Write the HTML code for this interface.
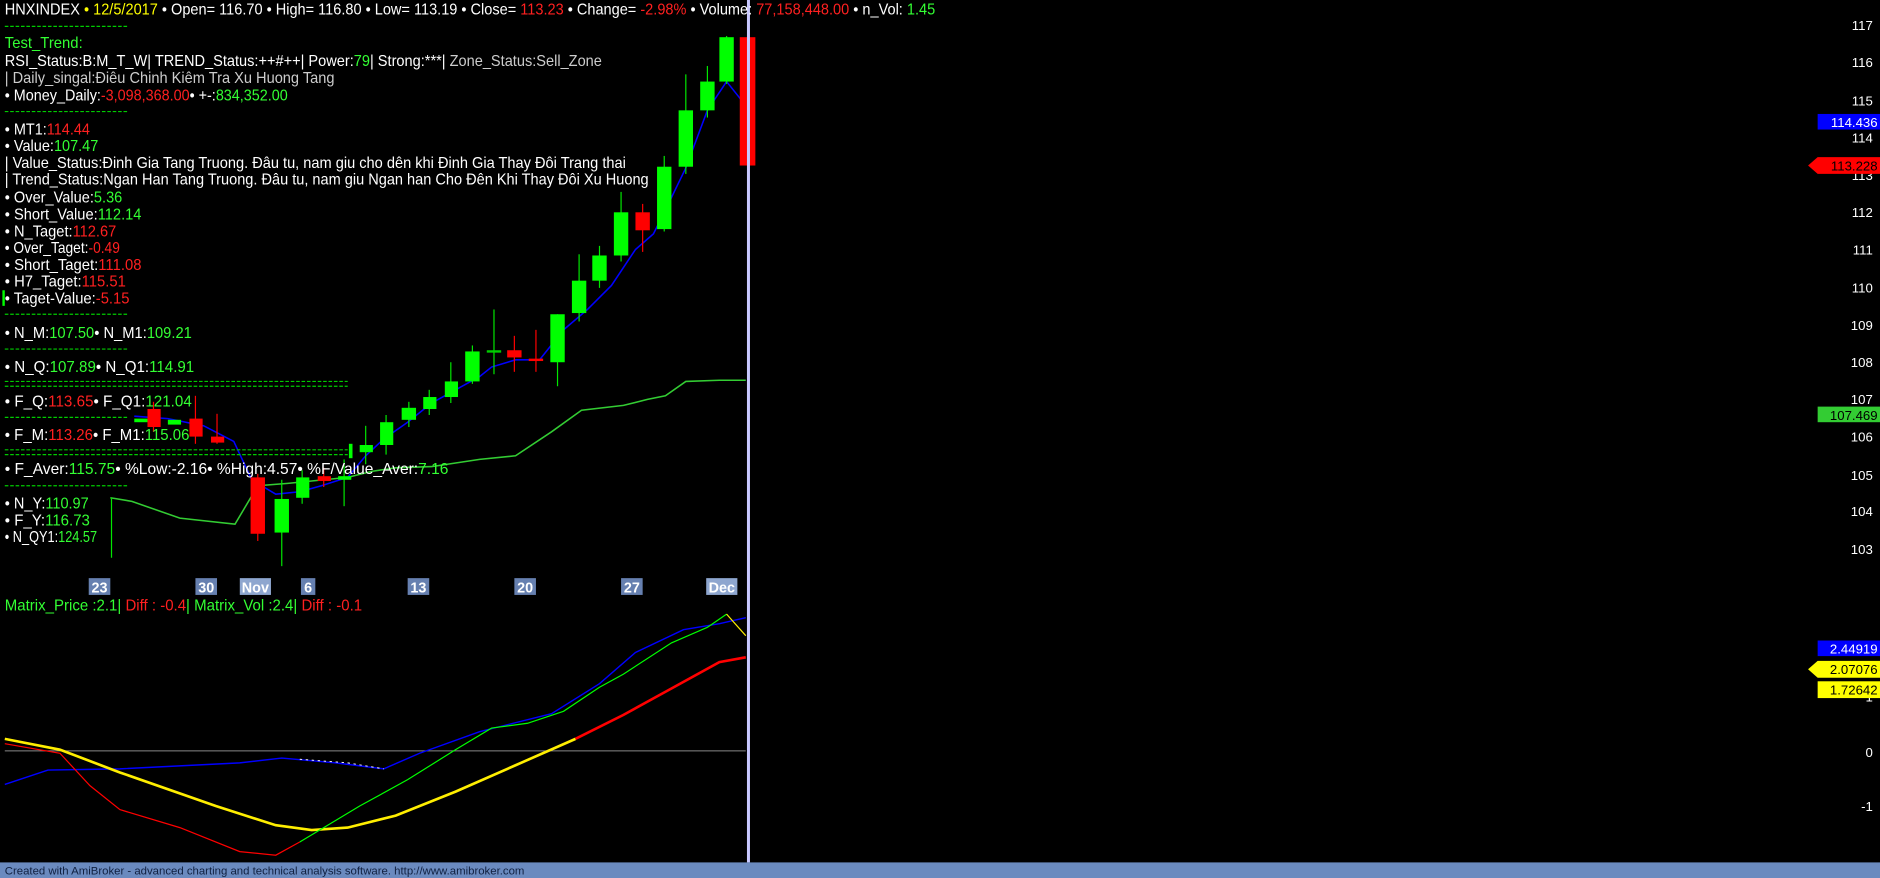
<!DOCTYPE html>
<html><head><meta charset="utf-8"><style>
html,body{margin:0;padding:0;background:#000;overflow:hidden}
svg{display:block}
text{font-family:"Liberation Sans",Arial,sans-serif}
</style></head><body>
<svg width="1880" height="878" viewBox="0 0 1568 732" preserveAspectRatio="none" xmlns="http://www.w3.org/2000/svg">
<rect width="1568" height="732" fill="#000"/>

<polyline fill="none" stroke="#33cc33" stroke-width="1.3" points="92,415 110,418 150,432 196,437 215,405 240,403 290,398 310,393 330,390 360,389 400,383 430,380 460,360 485,342 520,338 540,333 555,330 572,318 600,317 622,317"/>
<polyline fill="none" stroke="#0000ff" stroke-width="1.3" points="112,347 140,349 170,355 195,368 210,400 230,412 250,410 268,405 290,398 305,380 320,366 340,352 360,336 380,325 400,314 410,306 430,300 450,300 470,275 490,258 510,238 530,208 545,195 555,175 572,140 590,92 606,68 622,88"/>

<g stroke-width="1">
<line x1="93" y1="415" x2="93" y2="465" stroke="#00e600"/>
<rect x="112" y="349" width="11" height="3" fill="#00ff00"/>
<line x1="128" y1="335" x2="128" y2="360" stroke="#ff0000"/><rect x="123" y="341" width="11" height="15" fill="#ff0000"/>
<rect x="140" y="350" width="11" height="4" fill="#00ff00"/>
<line x1="163" y1="330" x2="163" y2="370" stroke="#ff0000"/><rect x="158" y="349" width="11" height="15" fill="#ff0000"/>
<line x1="181" y1="345" x2="181" y2="370" stroke="#ff0000"/><rect x="176" y="364" width="11" height="5" fill="#ff0000"/>
<line x1="215" y1="395" x2="215" y2="451" stroke="#ff0000"/><rect x="209" y="398" width="12" height="47" fill="#ff0000"/>
<line x1="235" y1="400" x2="235" y2="472" stroke="#00e600"/><rect x="229" y="416" width="12" height="28" fill="#00ff00"/>
<line x1="252" y1="392" x2="252" y2="420" stroke="#00e600"/><rect x="247" y="398" width="11" height="17" fill="#00ff00"/>
<line x1="270" y1="390" x2="270" y2="406" stroke="#ff0000"/><rect x="265" y="397" width="11" height="4" fill="#ff0000"/>
<line x1="287" y1="383" x2="287" y2="422" stroke="#00e600"/><rect x="282" y="397" width="11" height="3" fill="#00ff00"/>
<rect x="291" y="370" width="3" height="12" fill="#00ff00"/>
<line x1="305" y1="355" x2="305" y2="387" stroke="#00e600"/><rect x="300" y="371" width="11" height="6" fill="#00ff00"/>
<line x1="322" y1="346" x2="322" y2="379" stroke="#00e600"/><rect x="317" y="352" width="11" height="19" fill="#00ff00"/>
<line x1="341" y1="335" x2="341" y2="356" stroke="#00e600"/><rect x="335" y="340" width="12" height="10" fill="#00ff00"/>
<line x1="358" y1="325" x2="358" y2="346" stroke="#00e600"/><rect x="353" y="331" width="11" height="10" fill="#00ff00"/>
<line x1="376" y1="302" x2="376" y2="336" stroke="#00e600"/><rect x="371" y="318" width="11" height="13" fill="#00ff00"/>
<line x1="394" y1="288" x2="394" y2="320" stroke="#00e600"/><rect x="388" y="293" width="12" height="25" fill="#00ff00"/>
<line x1="412" y1="258" x2="412" y2="312" stroke="#00e600"/><rect x="406" y="292" width="12" height="2" fill="#00cc00"/>
<line x1="429" y1="280" x2="429" y2="310" stroke="#ff0000"/><rect x="423" y="292" width="12" height="6" fill="#ff0000"/>
<line x1="447" y1="275" x2="447" y2="310" stroke="#ff0000"/><rect x="441" y="299" width="12" height="2" fill="#ff0000"/>
<line x1="465" y1="262" x2="465" y2="322" stroke="#00e600"/><rect x="459" y="262" width="12" height="40" fill="#00ff00"/>
<line x1="483" y1="212" x2="483" y2="268" stroke="#00e600"/><rect x="477" y="234" width="12" height="27" fill="#00ff00"/>
<line x1="500" y1="205" x2="500" y2="240" stroke="#00e600"/><rect x="494" y="213" width="12" height="21" fill="#00ff00"/>
<line x1="518" y1="160" x2="518" y2="218" stroke="#00e600"/><rect x="512" y="177" width="12" height="36" fill="#00ff00"/>
<line x1="536" y1="170" x2="536" y2="210" stroke="#ff0000"/><rect x="530" y="177" width="12" height="15" fill="#ff0000"/>
<line x1="554" y1="130" x2="554" y2="193" stroke="#00e600"/><rect x="548" y="139" width="12" height="52" fill="#00ff00"/>
<line x1="572" y1="62" x2="572" y2="145" stroke="#00e600"/><rect x="566" y="92" width="12" height="47" fill="#00ff00"/>
<line x1="590" y1="55" x2="590" y2="98" stroke="#00e600"/><rect x="584" y="68" width="12" height="24" fill="#00ff00"/>
<line x1="606" y1="30" x2="606" y2="70" stroke="#00e600"/><rect x="600" y="31" width="12" height="37" fill="#00ff00"/>
<rect x="617" y="31" width="13" height="107" fill="#ff0000"/>
</g>

<line x1="4" y1="626" x2="622" y2="626" stroke="#888" stroke-width="0.8"/>
<polyline fill="none" stroke="#0000ff" stroke-width="1.2" points="4,654 40,642 100,641 200,636 235,632 280,636 320,641 350,628 400,610 460,595 500,570 530,544 570,525 600,520 622,515"/>
<polyline fill="none" stroke="#ffee00" stroke-width="2.2" points="4,616 50,625 100,644 180,672 230,688 260,692 290,690 330,680 380,660 430,638 480,616"/>
<polyline fill="none" stroke="#ff0000" stroke-width="2.2" points="480,616 520,596 560,574 600,552 622,548"/>
<polyline fill="none" stroke="#ff0000" stroke-width="1" points="4,620 50,628 75,655 100,675 150,690 200,710 230,713 250,702"/>
<polyline fill="none" stroke="#00ff00" stroke-width="1" points="250,702 270,690 300,672 340,650 380,625 410,607 440,603 470,593 500,573 520,562 560,536 590,523 606,512"/>
<polyline fill="none" stroke="#ffee00" stroke-width="1" points="606,512 622,530"/>
<polyline fill="none" stroke="#ffffff" stroke-width="0.8" stroke-dasharray="2 3" points="250,633 290,636 320,641"/>

<rect x="623" y="0" width="2.5" height="719" fill="#c8c8ff"/>

<g font-size="12" fill="#fff" font-weight="bold" text-anchor="middle">
<rect x="74" y="482" width="18" height="14" fill="#6680b0"/><text x="83" y="494">23</text>
<rect x="163" y="482" width="18" height="14" fill="#6680b0"/><text x="172" y="494">30</text>
<rect x="200" y="482" width="26" height="14" fill="#8ea6cf"/><text x="213" y="494">Nov</text>
<rect x="251" y="482" width="12" height="14" fill="#6680b0"/><text x="257" y="494">6</text>
<rect x="340" y="482" width="18" height="14" fill="#6680b0"/><text x="349" y="494">13</text>
<rect x="429" y="482" width="18" height="14" fill="#6680b0"/><text x="438" y="494">20</text>
<rect x="518" y="482" width="18" height="14" fill="#6680b0"/><text x="527" y="494">27</text>
<rect x="589" y="482" width="26" height="14" fill="#8ea6cf"/><text x="602" y="494">Dec</text>
</g>

<g font-size="11" fill="#fff" text-anchor="end">
<text x="1562" y="25">117</text><text x="1562" y="56">116</text><text x="1562" y="88">115</text>
<text x="1562" y="119">114</text><text x="1562" y="150">113</text><text x="1562" y="181">112</text>
<text x="1562" y="212">111</text><text x="1562" y="244">110</text><text x="1562" y="275">109</text>
<text x="1562" y="306">108</text><text x="1562" y="337">107</text><text x="1562" y="368">106</text>
<text x="1562" y="400">105</text><text x="1562" y="430">104</text><text x="1562" y="462">103</text>
<text x="1562" y="585">1</text><text x="1562" y="631">0</text><text x="1562" y="676">-1</text>
</g>
<g font-size="11" text-anchor="end">
<rect x="1516" y="95" width="52" height="13" fill="#0000ff"/><text x="1566" y="106" fill="#fff">114.436</text>
<polygon points="1508,138 1516,131 1568,131 1568,145 1516,145" fill="#ff0000"/><text x="1566" y="142" fill="#000">113.228</text>
<rect x="1516" y="339" width="52" height="13" fill="#33cc33"/><text x="1566" y="350" fill="#000">107.469</text>
<rect x="1516" y="534" width="52" height="13" fill="#0000ff"/><text x="1566" y="545" fill="#fff">2.44919</text>
<polygon points="1508,558 1516,551 1568,551 1568,565 1516,565" fill="#ffff00"/><text x="1566" y="562" fill="#000">2.07076</text>
<rect x="1516" y="568" width="52" height="14" fill="#ffff00"/><text x="1566" y="579" fill="#000">1.72642</text>
</g>

<rect x="0" y="719" width="1568" height="13" fill="#6a8abf"/>
<text x="4" y="729" font-size="9.5" fill="#102040">Created with AmiBroker - advanced charting and technical analysis software. http://www.amibroker.com</text>

<g stroke="#00cc00" stroke-width="1" stroke-dasharray="3 1.5">
<line x1="4" y1="22" x2="107" y2="22"/>
<line x1="4" y1="93" x2="107" y2="93"/>
<line x1="4" y1="262" x2="107" y2="262"/>
<line x1="4" y1="291" x2="107" y2="291"/>
<line x1="4" y1="318" x2="290" y2="318"/><line x1="4" y1="322" x2="290" y2="322"/>
<line x1="4" y1="348" x2="107" y2="348"/>
<line x1="4" y1="375" x2="290" y2="375"/><line x1="4" y1="379" x2="290" y2="379"/>
<line x1="4" y1="405" x2="107" y2="405"/>
</g>
<rect x="2" y="242" width="2" height="13" fill="#00ff00"/>

<g font-size="13" fill="#fff">
<text x="4" y="12" textLength="776" lengthAdjust="spacingAndGlyphs">HNXINDEX<tspan fill="#ffff00"> • 12/5/2017</tspan> • Open= 116.70 • High= 116.80 • Low= 113.19 • Close= <tspan fill="#ff2020">113.23</tspan> • Change= <tspan fill="#ff2020">-2.98%</tspan> • Volume: <tspan fill="#ff2020">77,158,448.00</tspan> • n_Vol: <tspan fill="#33ff33">1.45</tspan></text>
<text x="4" y="40" fill="#33ff33" textLength="65" lengthAdjust="spacingAndGlyphs">Test_Trend:</text>
<text x="4" y="55" textLength="498" lengthAdjust="spacingAndGlyphs">RSI_Status:B:M_T_W| TREND_Status:++#++| Power:<tspan fill="#33ff33">79</tspan>| Strong:***| <tspan fill="#ccc">Zone_Status:Sell_Zone</tspan></text>
<text x="4" y="69" fill="#ccc" textLength="275" lengthAdjust="spacingAndGlyphs">| Daily_singal:Điêu Chinh Kiêm Tra Xu Huong Tang</text>
<text x="4" y="84" textLength="236" lengthAdjust="spacingAndGlyphs">• Money_Daily:<tspan fill="#ff2020">-3,098,368.00</tspan>• +-:<tspan fill="#33ff33">834,352.00</tspan></text>
<text x="4" y="112" textLength="71" lengthAdjust="spacingAndGlyphs">• MT1:<tspan fill="#ff2020">114.44</tspan></text>
<text x="4" y="126" textLength="78" lengthAdjust="spacingAndGlyphs">• Value:<tspan fill="#33ff33">107.47</tspan></text>
<text x="4" y="140" textLength="518" lengthAdjust="spacingAndGlyphs">| Value_Status:Đinh Gia Tang Truong. Đâu tu, nam giu cho dên khi Đinh Gia Thay Đôi Trang thai</text>
<text x="4" y="154" textLength="537" lengthAdjust="spacingAndGlyphs">| Trend_Status:Ngan Han Tang Truong. Đâu tu, nam giu Ngan han Cho Đên Khi Thay Đôi Xu Huong</text>
<text x="4" y="169" textLength="98" lengthAdjust="spacingAndGlyphs">• Over_Value:<tspan fill="#33ff33">5.36</tspan></text>
<text x="4" y="183" textLength="114" lengthAdjust="spacingAndGlyphs">• Short_Value:<tspan fill="#33ff33">112.14</tspan></text>
<text x="4" y="197" textLength="93" lengthAdjust="spacingAndGlyphs">• N_Taget:<tspan fill="#ff2020">112.67</tspan></text>
<text x="4" y="211" textLength="96" lengthAdjust="spacingAndGlyphs">• Over_Taget:<tspan fill="#ff2020">-0.49</tspan></text>
<text x="4" y="225" textLength="114" lengthAdjust="spacingAndGlyphs">• Short_Taget:<tspan fill="#ff2020">111.08</tspan></text>
<text x="4" y="239" textLength="101" lengthAdjust="spacingAndGlyphs">• H7_Taget:<tspan fill="#ff2020">115.51</tspan></text>
<text x="4" y="253" textLength="104" lengthAdjust="spacingAndGlyphs">• Taget-Value:<tspan fill="#ff2020">-5.15</tspan></text>
<text x="4" y="282" textLength="156" lengthAdjust="spacingAndGlyphs">• N_M:<tspan fill="#33ff33">107.50</tspan>• N_M1:<tspan fill="#33ff33">109.21</tspan></text>
<text x="4" y="310" textLength="158" lengthAdjust="spacingAndGlyphs">• N_Q:<tspan fill="#33ff33">107.89</tspan>• N_Q1:<tspan fill="#33ff33">114.91</tspan></text>
<text x="4" y="339" textLength="156" lengthAdjust="spacingAndGlyphs">• F_Q:<tspan fill="#ff2020">113.65</tspan>• F_Q1:<tspan fill="#33ff33">121.04</tspan></text>
<text x="4" y="367" textLength="154" lengthAdjust="spacingAndGlyphs">• F_M:<tspan fill="#ff2020">113.26</tspan>• F_M1:<tspan fill="#33ff33">115.06</tspan></text>
<text x="4" y="395" textLength="370" lengthAdjust="spacingAndGlyphs">• F_Aver:<tspan fill="#33ff33">115.75</tspan>• %Low:-2.16• %High:4.57• %F/Value_Aver:<tspan fill="#33ff33">7.16</tspan></text>
<text x="4" y="424" textLength="70" lengthAdjust="spacingAndGlyphs">• N_Y:<tspan fill="#33ff33">110.97</tspan></text>
<text x="4" y="438" textLength="71" lengthAdjust="spacingAndGlyphs">• F_Y:<tspan fill="#33ff33">116.73</tspan></text>
<text x="4" y="452" textLength="77" lengthAdjust="spacingAndGlyphs">• N_QY1:<tspan fill="#33ff33">124.57</tspan></text>
<text x="4" y="509" fill="#33ff33" textLength="298" lengthAdjust="spacingAndGlyphs">Matrix_Price :2.1|   <tspan fill="#ff2020">Diff : -0.4</tspan>| Matrix_Vol :2.4|   <tspan fill="#ff2020">Diff : -0.1</tspan></text>
</g>
</svg>
</body></html>
